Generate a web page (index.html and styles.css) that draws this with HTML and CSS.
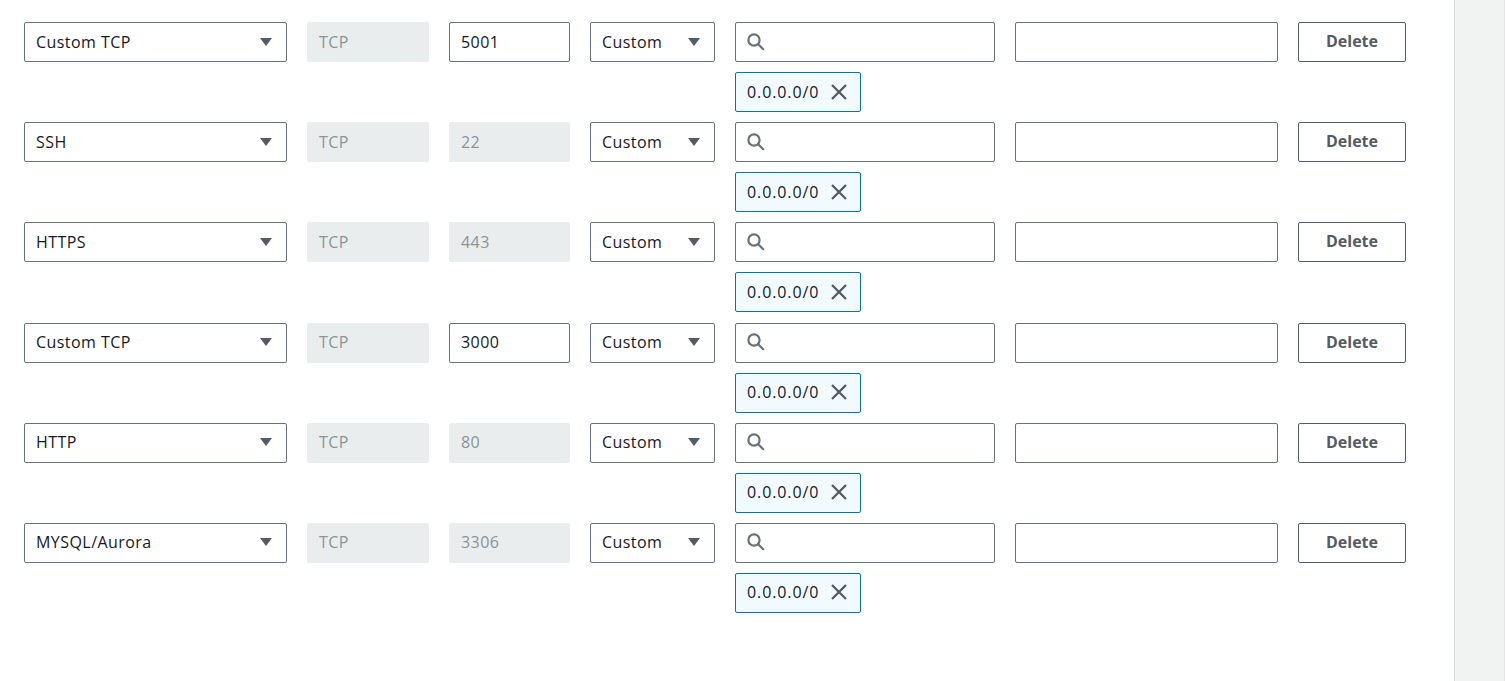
FILE: index.html
```html
<!DOCTYPE html>
<html>
<head>
<meta charset="utf-8">
<link rel="stylesheet" href="styles.css">
</head>
<body>
<div class="page">
  <main class="rules">
    <div class="rule">
      <div class="select wide"><span>Custom TCP</span><svg class="caret" viewBox="0 0 14 10"><path d="M1 1h12L7 9z"/></svg></div>
      <div class="field disabled proto">TCP</div>
      <div class="field port">5001</div>
      <div class="select src"><span>Custom</span><svg class="caret" viewBox="0 0 14 10"><path d="M1 1h12L7 9z"/></svg></div>
      <div class="searchcol">
        <div class="field search"><svg class="mag" viewBox="0 0 20 20"><circle cx="8" cy="8" r="5.6"/><path d="M12.2 12.2l5 5"/></svg></div>
        <div class="tag"><span class="ip">0.0.0.0/0</span><svg class="x" viewBox="0 0 18 18"><path d="M2 2l14 14M16 2L2 16"/></svg></div>
      </div>
      <div class="field desc"></div>
      <button class="del">Delete</button>
    </div>
    <div class="rule">
      <div class="select wide"><span>SSH</span><svg class="caret" viewBox="0 0 14 10"><path d="M1 1h12L7 9z"/></svg></div>
      <div class="field disabled proto">TCP</div>
      <div class="field disabled port">22</div>
      <div class="select src"><span>Custom</span><svg class="caret" viewBox="0 0 14 10"><path d="M1 1h12L7 9z"/></svg></div>
      <div class="searchcol">
        <div class="field search"><svg class="mag" viewBox="0 0 20 20"><circle cx="8" cy="8" r="5.6"/><path d="M12.2 12.2l5 5"/></svg></div>
        <div class="tag"><span class="ip">0.0.0.0/0</span><svg class="x" viewBox="0 0 18 18"><path d="M2 2l14 14M16 2L2 16"/></svg></div>
      </div>
      <div class="field desc"></div>
      <button class="del">Delete</button>
    </div>
    <div class="rule">
      <div class="select wide"><span>HTTPS</span><svg class="caret" viewBox="0 0 14 10"><path d="M1 1h12L7 9z"/></svg></div>
      <div class="field disabled proto">TCP</div>
      <div class="field disabled port">443</div>
      <div class="select src"><span>Custom</span><svg class="caret" viewBox="0 0 14 10"><path d="M1 1h12L7 9z"/></svg></div>
      <div class="searchcol">
        <div class="field search"><svg class="mag" viewBox="0 0 20 20"><circle cx="8" cy="8" r="5.6"/><path d="M12.2 12.2l5 5"/></svg></div>
        <div class="tag"><span class="ip">0.0.0.0/0</span><svg class="x" viewBox="0 0 18 18"><path d="M2 2l14 14M16 2L2 16"/></svg></div>
      </div>
      <div class="field desc"></div>
      <button class="del">Delete</button>
    </div>
    <div class="rule">
      <div class="select wide"><span>Custom TCP</span><svg class="caret" viewBox="0 0 14 10"><path d="M1 1h12L7 9z"/></svg></div>
      <div class="field disabled proto">TCP</div>
      <div class="field port">3000</div>
      <div class="select src"><span>Custom</span><svg class="caret" viewBox="0 0 14 10"><path d="M1 1h12L7 9z"/></svg></div>
      <div class="searchcol">
        <div class="field search"><svg class="mag" viewBox="0 0 20 20"><circle cx="8" cy="8" r="5.6"/><path d="M12.2 12.2l5 5"/></svg></div>
        <div class="tag"><span class="ip">0.0.0.0/0</span><svg class="x" viewBox="0 0 18 18"><path d="M2 2l14 14M16 2L2 16"/></svg></div>
      </div>
      <div class="field desc"></div>
      <button class="del">Delete</button>
    </div>
    <div class="rule">
      <div class="select wide"><span>HTTP</span><svg class="caret" viewBox="0 0 14 10"><path d="M1 1h12L7 9z"/></svg></div>
      <div class="field disabled proto">TCP</div>
      <div class="field disabled port">80</div>
      <div class="select src"><span>Custom</span><svg class="caret" viewBox="0 0 14 10"><path d="M1 1h12L7 9z"/></svg></div>
      <div class="searchcol">
        <div class="field search"><svg class="mag" viewBox="0 0 20 20"><circle cx="8" cy="8" r="5.6"/><path d="M12.2 12.2l5 5"/></svg></div>
        <div class="tag"><span class="ip">0.0.0.0/0</span><svg class="x" viewBox="0 0 18 18"><path d="M2 2l14 14M16 2L2 16"/></svg></div>
      </div>
      <div class="field desc"></div>
      <button class="del">Delete</button>
    </div>
    <div class="rule">
      <div class="select wide"><span>MYSQL/Aurora</span><svg class="caret" viewBox="0 0 14 10"><path d="M1 1h12L7 9z"/></svg></div>
      <div class="field disabled proto">TCP</div>
      <div class="field disabled port">3306</div>
      <div class="select src"><span>Custom</span><svg class="caret" viewBox="0 0 14 10"><path d="M1 1h12L7 9z"/></svg></div>
      <div class="searchcol">
        <div class="field search"><svg class="mag" viewBox="0 0 20 20"><circle cx="8" cy="8" r="5.6"/><path d="M12.2 12.2l5 5"/></svg></div>
        <div class="tag"><span class="ip">0.0.0.0/0</span><svg class="x" viewBox="0 0 18 18"><path d="M2 2l14 14M16 2L2 16"/></svg></div>
      </div>
      <div class="field desc"></div>
      <button class="del">Delete</button>
    </div>
  </main>
  <aside class="scrollbar"></aside>
</div>
</body>
</html>
```

FILE: styles.css
```css
html, body {
  margin: 0;
  padding: 0;
  background: #fff;
  height: 100%;
  overflow: hidden;
}
body {
  font-family: "Open Sans", "Noto Sans", sans-serif;
  font-size: 16px;
  letter-spacing: 0.45px;
  color: #16191f;
}
.page {
  display: flex;
  height: 681px;
}
.rules {
  flex: 1;
  padding: 22px 0 0 24px;
  display: flex;
  flex-direction: column;
  gap: 10.2px;
}
.rule {
  display: grid;
  grid-template-columns: 263px 122px 121px 125px 260px 263px 108px;
  column-gap: 20px;
  align-items: start;
}
.select, .field {
  box-sizing: border-box;
  height: 40px;
  border: 1px solid #687078;
  border-radius: 2px;
  display: flex;
  align-items: center;
  padding: 0 11px;
  padding-bottom: 1px;
  background: #fff;
}
.select {
  justify-content: space-between;
  padding-right: 13px;
}
.caret {
  width: 14px;
  height: 10px;
  fill: #545b64;
}
.field.disabled {
  background: #eaeded;
  border-color: #eaeded;
  color: #879596;
}
.searchcol {
  display: flex;
  flex-direction: column;
  gap: 10px;
}
.search {
  padding-left: 10px;
}
.mag {
  width: 20px;
  height: 20px;
  fill: none;
  stroke: #687078;
  stroke-width: 2.2;
  stroke-linecap: round;
}
.tag {
  box-sizing: border-box;
  width: 126px;
  height: 40px;
  border: 1px solid #0073bb;
  border-radius: 2px;
  background: #f1faff;
  display: flex;
  align-items: center;
  padding: 0 0 1px 11px;
  gap: 11px;
}
.ip {
  letter-spacing: 0.9px;
}
.x {
  width: 18px;
  height: 18px;
  fill: none;
  stroke: #545b64;
  stroke-width: 2.3;
}
.del {
  box-sizing: border-box;
  height: 40px;
  padding: 0 0 2px;
  border: 1px solid #545b64;
  border-radius: 2px;
  background: #fff;
  color: #545b64;
  font-family: "Open Sans", "Noto Sans", sans-serif;
  font-weight: 700;
  font-size: 16px;
  letter-spacing: 0;
  cursor: pointer;
}
.scrollbar {
  width: 49px;
  margin-right: 1px;
  background: #f1f2f2;
  border-left: 1px solid #d5dbdb;
  border-right: 1px solid #e3e6e6;
}
```
